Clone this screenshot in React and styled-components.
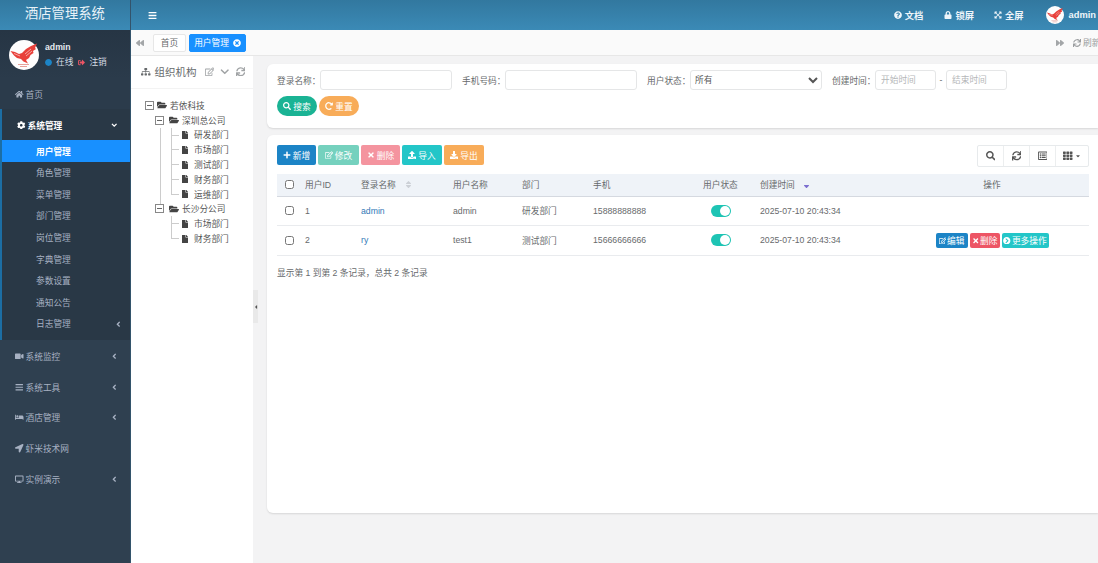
import React from 'react';
import styled, { createGlobalStyle } from 'styled-components';
import {
  FaBackward, FaBars, FaBed, FaChevronDown, FaCircle, FaCog, FaDesktop, FaDownload, FaExpandArrowsAlt,
  FaFile, FaFolderOpen, FaForward, FaHome, FaLocationArrow, FaLock, FaPlus, FaQuestionCircle, FaRedoAlt,
  FaRegEdit, FaRegListAlt, FaSearch, FaSignOutAlt, FaSitemap, FaSort, FaSortDown, FaSync, FaTh, FaTimes,
  FaTimesCircle, FaUpload, FaVideo, FaChevronCircleRight, FaAngleLeft, FaAngleDown, FaCaretDown, FaCaretLeft,
} from 'react-icons/fa';

const GlobalStyle = createGlobalStyle`
  html, body { margin: 0; padding: 0; height: 100%; overflow: hidden; }
  body {
    font-family: "Liberation Sans", "Noto Sans CJK SC", sans-serif;
    font-size: 8.7px;
    color: #676a6c;
    background: #f3f3f4;
  }
  * { box-sizing: border-box; }
`;

const Logo = ({ size }) => (
  <svg width={size} height={size} viewBox="0 0 30 30">
    <circle cx="15" cy="15" r="15" fill="#fdfdfd" />
    <path d="M1.5 11 L6 12 L10 14 L13 13 L17 9 L22 6 L28 3.5 L26 8 L27 9 L24 11 L24.5 13 L21.5 15 L20 18 L17 20 L19 23.5 L14.5 21.5 L12 19 L8 18 L5 15.5 Z" fill="#e8403a" />
    <path d="M16 14 L22 9 M17 16 L23 11 M5 13.5 L11 16" stroke="#fbd0cc" strokeWidth="0.7" />
    <path d="M9 24.5 L20 24.5 M11 26.5 L18 26.5" stroke="#e8a09a" strokeWidth="1" />
  </svg>
);

const Page = styled.div`
  display: flex;
  width: 1098px;
  height: 563px;
  overflow: hidden;
`;

const Sidebar = styled.aside`
  flex: 0 0 131px;
  display: flex;
  flex-direction: column;
  background: #2f4050;
  border-right: 1px solid #33536b;
`;
const Brand = styled.div`
  height: 30px;
  flex: none;
  padding-left: 25px;
  font-size: 13.3px;
  line-height: 28px;
  color: #e8f2f8;
  background: linear-gradient(#32789f, #3b8ab6);
`;
const UserPanel = styled.div`
  height: 49px;
  flex: none;
  display: flex;
  padding: 10px 0 0 9px;
  gap: 6px;
  background: linear-gradient(#263544, #2b3b4b);
`;
const UserInfo = styled.div`
  padding-top: 1px;
  color: #d5dde5;
  strong { display: block; line-height: 12px; font-size: 8.7px; color: #e4e9ee; }
`;
const Status = styled.div`
  display: flex;
  align-items: center;
  gap: 4px;
  margin-top: 3px;
  line-height: 12px;
  svg { font-size: 7px; }
  svg + span { margin-right: 1px; }
`;
const SideItem = styled.div`
  height: ${p => p.$h || 30.7}px;
  flex: none;
  display: flex;
  align-items: center;
  padding: 0 ${p => (p.$sub ? 8 : 12)}px 0 ${p => (p.$sub ? 34 : p.$strong ? 17 : 15)}px;
  gap: 2px;
  color: ${p => (p.$active ? '#fff' : '#a7b1c2')};
  font-weight: ${p => (p.$strong ? 700 : 400)};
  background: ${p => (p.$active ? '#1890ff' : 'transparent')};
  font-size: 8.7px;
  svg { font-size: 8.5px; flex: none; }
  span { flex: 1; }
`;
const HomeRow = styled(SideItem)`
  background: #2b3b4b;
  height: 30px;
`;
const OpenGroup = styled.div`
  flex: none;
  height: 231px;
  padding-top: 1px;
  background: #293846;
  border-left: 2px solid #1c6ea4;
`;
const GroupHead = styled(SideItem)`
  height: 30px;
  color: #fff;
  padding-left: 15px;
`;
const SubList = styled.div`
  display: flex;
  flex-direction: column;
`;
const MenuRest = styled.div`
  padding-top: 1px;
`;

const Main = styled.main`
  flex: 1;
  min-width: 0;
  display: flex;
  flex-direction: column;
`;
const TopBar = styled.header`
  height: 30px;
  flex: none;
  display: flex;
  align-items: center;
  padding-left: 17px;
  color: #fff;
  background: linear-gradient(#32789f, #3b8ab6);
`;
const TopSpacer = styled.div`
  flex: 1;
`;
const TopLink = styled.div`
  display: flex;
  align-items: center;
  gap: ${p => p.$gap || 3}px;
  margin-right: ${p => p.$mr}px;
  font-weight: 700;
  font-size: 9.3px;
  color: #eef5fa;
  svg { font-size: 8px; }
`;
const TabBar = styled.div`
  height: 26px;
  flex: none;
  display: flex;
  align-items: center;
  padding-left: 5px;
  background: #fafafa;
  border-bottom: 1px solid #e7e7e7;
  white-space: nowrap;
`;
const NavIcon = styled.span`
  display: flex;
  color: #a3a6a8;
  font-size: 8px;
  width: 17px;
`;
const Tab = styled.div`
  height: 18px;
  display: flex;
  align-items: center;
  justify-content: center;
  gap: 4px;
  width: ${p => p.$w}px;
  margin-right: 3px;
  border-radius: 2px;
  background: ${p => (p.$active ? '#1890ff' : '#fff')};
  color: ${p => (p.$active ? '#fff' : '#676a6c')};
  border: 1px solid ${p => (p.$active ? '#1890ff' : '#e7e7e7')};
  svg { font-size: 8px; }
`;
const RefreshTab = styled.div`
  display: flex;
  align-items: center;
  gap: 2px;
  width: 25px;
  flex: none;
  overflow: hidden;
  color: #9a9d9f;
  svg { font-size: 8px; flex: none; }
`;

const Workspace = styled.div`
  flex: 1;
  min-height: 0;
  display: flex;
`;
const TreePanel = styled.section`
  flex: 0 0 122px;
  background: #fff;
`;
const TreeHead = styled.div`
  height: 33px;
  display: flex;
  align-items: center;
  padding: 0 0 1px 10px;
  font-size: 10.5px;
  color: #676a6c;
  border-bottom: 1px solid #f3f3f3;
  svg { font-size: 9.5px; flex: none; }
`;
const TreeTitle = styled.span`
  margin: 0 8px 0 4px;
  white-space: nowrap;
`;
const TreeTool = styled.span`
  display: flex;
  margin-right: 6px;
  color: #a0a3a5;
  svg { font-size: 9.5px; }
`;
const Tree = styled.div`
  padding-top: 9px;
`;
const TreeRow = styled.div`
  position: relative;
  height: 14.8px;
  display: flex;
  align-items: center;
  padding-left: ${p => 14 + p.$level * 10}px;
  color: #555;
  white-space: nowrap;
`;
const Toggle = styled.span`
  position: relative;
  flex: none;
  width: 9px;
  height: 9px;
  margin-right: ${p => p.$gap}px;
  border: 1px solid #888;
  background: #fff;
  display: flex;
  align-items: center;
  justify-content: center;
  &::after { content: ''; width: 5px; height: 1px; background: #666; }
`;
const FolderIcon = styled(FaFolderOpen)`
  flex: none;
  font-size: 10px;
  margin-right: 3px;
  color: #444;
`;
const LeafIcon = styled(FaFile)`
  flex: none;
  font-size: 8px;
  margin: 0 5px 0 26px;
  color: #444;
`;
const Connector = styled.i`
  position: absolute;
  left: ${p => p.$x}px;
  top: ${p => p.$top}px;
  height: ${p => p.$h}px;
  width: ${p => p.$w || 0}px;
  border-left: 1px solid #ccc;
  border-bottom: ${p => (p.$w ? '1px solid #ccc' : 'none')};
`;
const Splitter = styled.div`
  flex: 0 0 5px;
  background: #f3f3f4;
  display: flex;
  align-items: center;
`;
const Handle = styled.div`
  width: 5px;
  height: 33px;
  margin-top: -6px;
  background: #e9e9e9;
  display: flex;
  align-items: center;
  justify-content: center;
  color: #555;
  svg { font-size: 6px; flex: none; }
`;
const Content = styled.div`
  flex: 1;
  min-width: 0;
  padding: 8px 0 0 9px;
  background: #f3f3f4;
`;
const SearchCard = styled.section`
  height: 64px;
  padding: 6px 10px;
  margin-bottom: 7px;
  background: #fff;
  border-radius: 6px 0 0 6px;
  box-shadow: 0 1px 2px rgba(0, 0, 0, 0.12);
`;
const FormRow = styled.div`
  display: flex;
  align-items: center;
  height: 20px;
  white-space: nowrap;
`;
const FormLabel = styled.label`
  width: 43px;
  flex: none;
  margin-left: ${p => p.$ml || 0}px;
`;
const Field = styled.input`
  width: ${p => p.$w}px;
  height: 20px;
  flex: none;
  padding: 0 5px;
  border: 1px solid #e5e6e7;
  border-radius: 3px;
  font: inherit;
  outline: none;
  &::placeholder { color: #b5b7b9; }
`;
const Select = styled.select`
  width: 132px;
  height: 20px;
  flex: none;
  border: 1px solid #e5e6e7;
  border-radius: 3px;
  background: #fff;
  color: #555;
  font: inherit;
  outline: none;
`;
const Dash = styled.span`
  width: 10px;
  text-align: center;
`;
const FormButtons = styled.div`
  display: flex;
  gap: 2px;
  margin-top: 6px;
`;
const Pill = styled.button`
  width: 40px;
  height: 20px;
  display: flex;
  align-items: center;
  justify-content: center;
  gap: 2px;
  padding: 0;
  border: none;
  border-radius: 10px;
  color: #fff;
  background: ${p => p.$bg};
  font: inherit;
  svg { font-size: 8px; }
`;
const TableCard = styled.section`
  height: 378px;
  padding: 10px 9px 0 10px;
  background: #fff;
  border-radius: 6px 0 0 6px;
  box-shadow: 0 1px 2px rgba(0, 0, 0, 0.12);
`;
const Toolbar = styled.div`
  display: flex;
  align-items: flex-start;
  height: 29px;
  gap: 2px;
`;
const ActionButton = styled.button`
  width: ${p => p.$w}px;
  height: 20px;
  display: flex;
  align-items: center;
  justify-content: center;
  gap: 2px;
  padding: 0;
  border: none;
  border-radius: 2px;
  color: #fff;
  background: ${p => p.$bg};
  font: inherit;
  svg { font-size: 8px; }
`;
const ToolGroup = styled.div`
  margin-left: auto;
  display: flex;
  height: 22px;
  border: 1px solid #e7eaec;
  border-radius: 2px;
`;
const ToolButton = styled.span`
  width: ${p => p.$w || 26}px;
  display: flex;
  align-items: center;
  justify-content: center;
  color: #555;
  border-left: ${p => (p.$first ? 'none' : '1px solid #eceeef')};
  svg { font-size: 9.5px; }
  svg + svg { font-size: 6px; margin-left: 2px; }
`;
const Table = styled.table`
  width: 812px;
  border-collapse: collapse;
  table-layout: fixed;
  th {
    height: 22px;
    padding: 0 0 0 8px;
    text-align: left;
    font-weight: 400;
    background: #eff3f8;
    border-bottom: 1px solid #d5d9e0;
  }
  td {
    height: 29.5px;
    padding: 0 0 0 8px;
    border-bottom: 1px solid #e9ebee;
  }
  th:last-child, td:last-child { text-align: center; padding: 0; }
`;
const Check = styled.input.attrs({ type: 'checkbox' })`
  display: block;
  width: 9px;
  height: 9px;
  margin: 0;
  accent-color: #1890ff;
`;
const SortMark = styled.span`
  margin-left: ${p => p.$ml}px;
  color: ${p => p.$color};
  font-size: 9px;
  svg { vertical-align: -1px; }
`;
const NameLink = styled.a`
  color: #337ab7;
`;
const Switch = styled.span`
  display: flex;
  justify-content: flex-end;
  align-items: center;
  width: 20px;
  height: 12px;
  margin-left: 8px;
  padding-right: 1px;
  border-radius: 6px;
  background: #1ec4b4;
  &::after { content: ''; width: 10px; height: 10px; border-radius: 50%; background: #fff; }
`;
const RowActions = styled.div`
  display: flex;
  justify-content: center;
  gap: 2px;
`;
const MiniButton = styled.span`
  height: 15px;
  width: ${p => p.$w}px;
  display: flex;
  align-items: center;
  justify-content: center;
  gap: 1px;
  color: #fff;
  border-radius: 2px;
  background: ${p => p.$bg};
  svg { font-size: 7.5px; }
`;
const Summary = styled.div`
  margin-top: 11px;
  line-height: 12px;
`;

const subMenus = ['用户管理', '角色管理', '菜单管理', '部门管理', '岗位管理', '字典管理', '参数设置', '通知公告'];
const menus = [
  { icon: <FaVideo />, name: '系统监控', more: true },
  { icon: <FaBars />, name: '系统工具', more: true },
  { icon: <FaBed />, name: '酒店管理', more: true },
  { icon: <FaLocationArrow />, name: '虾米技术网' },
  { icon: <FaDesktop />, name: '实例演示', more: true },
];
const users = [
  { id: 1, login: 'admin', name: 'admin', dept: '研发部门', phone: '15888888888' },
  { id: 2, login: 'ry', name: 'test1', dept: '测试部门', phone: '15666666666', actions: true },
];

const Branch = ({ level, name, trunk }) => (
  <TreeRow $level={level}>
    {trunk && <Connector $x={29} $top={0} $h={4} />}
    <Toggle $gap={level ? 5 : 3} />
    <FolderIcon />
    {name}
  </TreeRow>
);

const Leaf = ({ name, last, trunk }) => (
  <TreeRow $level={1}>
    {trunk && <Connector $x={29} $top={0} $h={15} />}
    <Connector $x={40} $top={0} $h={8} $w={8} />
    {!last && <Connector $x={40} $top={8} $h={7} />}
    <LeafIcon />
    {name}
  </TreeRow>
);

export default function App() {
  return (
    <Page>
      <GlobalStyle />
      <Sidebar>
        <Brand>酒店管理系统</Brand>
        <UserPanel>
          <Logo size={30} />
          <UserInfo>
            <strong>admin</strong>
            <Status>
              <FaCircle color="#1c84c6" /><span>在线</span>
              <FaSignOutAlt color="#ed5565" /><span>注销</span>
            </Status>
          </UserInfo>
        </UserPanel>
        <HomeRow><FaHome /><span>首页</span></HomeRow>
        <OpenGroup>
          <GroupHead $strong><FaCog /><span>系统管理</span><FaAngleDown /></GroupHead>
          <SubList>
            {subMenus.map((m, i) => (
              <SideItem key={m} $sub $h={i === 0 ? 22 : 21.6} $active={i === 0} $strong={i === 0}>
                <span>{m}</span>
              </SideItem>
            ))}
            <SideItem $sub $h={21.6}><span>日志管理</span><FaAngleLeft /></SideItem>
          </SubList>
        </OpenGroup>
        <MenuRest>
          {menus.map(m => (
            <SideItem key={m.name}>
              {m.icon}
              <span>{m.name}</span>
              {m.more && <FaAngleLeft />}
            </SideItem>
          ))}
        </MenuRest>
      </Sidebar>

      <Main>
        <TopBar>
          <FaBars size={9} />
          <TopSpacer />
          <TopLink $mr={21}><FaQuestionCircle />文档</TopLink>
          <TopLink $mr={20}><FaLock />锁屏</TopLink>
          <TopLink $mr={22}><FaExpandArrowsAlt />全屏</TopLink>
          <TopLink $mr={2} $gap={5}><Logo size={18} /><span>admin</span></TopLink>
        </TopBar>
        <TabBar>
          <NavIcon><FaBackward /></NavIcon>
          <Tab $w={33}>首页</Tab>
          <Tab $w={57} $active>用户管理<FaTimesCircle /></Tab>
          <TopSpacer />
          <NavIcon><FaForward /></NavIcon>
          <RefreshTab><FaSync />刷新</RefreshTab>
        </TabBar>
        <Workspace>
          <TreePanel>
            <TreeHead>
              <FaSitemap />
              <TreeTitle>组织机构</TreeTitle>
              <TreeTool><FaRegEdit /></TreeTool>
              <TreeTool><FaChevronDown /></TreeTool>
              <TreeTool><FaSync /></TreeTool>
            </TreeHead>
            <Tree>
              <Branch level={0} name="若依科技" />
              <Branch level={1} name="深圳总公司" />
              <Leaf name="研发部门" trunk />
              <Leaf name="市场部门" trunk />
              <Leaf name="测试部门" trunk />
              <Leaf name="财务部门" trunk />
              <Leaf name="运维部门" trunk last />
              <Branch level={1} name="长沙分公司" trunk />
              <Leaf name="市场部门" />
              <Leaf name="财务部门" last />
            </Tree>
          </TreePanel>
          <Splitter>
            <Handle><FaCaretLeft /></Handle>
          </Splitter>
          <Content>
            <SearchCard>
              <FormRow>
                <FormLabel>登录名称：</FormLabel>
                <Field $w={132} />
                <FormLabel $ml={10}>手机号码：</FormLabel>
                <Field $w={132} />
                <FormLabel $ml={10}>用户状态：</FormLabel>
                <Select defaultValue="所有"><option>所有</option></Select>
                <FormLabel $ml={10}>创建时间：</FormLabel>
                <Field $w={61} placeholder="开始时间" />
                <Dash>-</Dash>
                <Field $w={61} placeholder="结束时间" />
              </FormRow>
              <FormButtons>
                <Pill $bg="#1ab394"><FaSearch />搜索</Pill>
                <Pill $bg="#f8ac59"><FaRedoAlt />重置</Pill>
              </FormButtons>
            </SearchCard>
            <TableCard>
              <Toolbar>
                <ActionButton $w={39} $bg="#1c84c6"><FaPlus />新增</ActionButton>
                <ActionButton $w={41} $bg="#75d1be"><FaRegEdit />修改</ActionButton>
                <ActionButton $w={39} $bg="#f4949f"><FaTimes />删除</ActionButton>
                <ActionButton $w={40} $bg="#23c6c8"><FaUpload />导入</ActionButton>
                <ActionButton $w={40} $bg="#f8ac59"><FaDownload />导出</ActionButton>
                <ToolGroup>
                  <ToolButton $first $w={25}><FaSearch /></ToolButton>
                  <ToolButton><FaSync /></ToolButton>
                  <ToolButton><FaRegListAlt /></ToolButton>
                  <ToolButton $w={33}><FaTh /><FaCaretDown /></ToolButton>
                </ToolGroup>
              </Toolbar>
              <Table>
                <colgroup>
                  <col width="20" /><col width="56" /><col width="92" /><col width="69" />
                  <col width="71" /><col width="110" /><col width="57" /><col width="143" /><col width="194" />
                </colgroup>
                <thead>
                  <tr>
                    <th><Check /></th>
                    <th>用户ID</th>
                    <th>登录名称<SortMark $ml={8} $color="#ccd0d6"><FaSort /></SortMark></th>
                    <th>用户名称</th>
                    <th>部门</th>
                    <th>手机</th>
                    <th>用户状态</th>
                    <th>创建时间<SortMark $ml={7} $color="#7c6fd0"><FaSortDown /></SortMark></th>
                    <th>操作</th>
                  </tr>
                </thead>
                <tbody>
                  {users.map(u => (
                    <tr key={u.id}>
                      <td><Check /></td>
                      <td>{u.id}</td>
                      <td><NameLink>{u.login}</NameLink></td>
                      <td>{u.name}</td>
                      <td>{u.dept}</td>
                      <td>{u.phone}</td>
                      <td><Switch /></td>
                      <td>2025-07-10 20:43:34</td>
                      <td>
                        {u.actions && (
                          <RowActions>
                            <MiniButton $w={32} $bg="#1c84c6"><FaRegEdit />编辑</MiniButton>
                            <MiniButton $w={30} $bg="#ed5565"><FaTimes />删除</MiniButton>
                            <MiniButton $w={47} $bg="#23c6c8"><FaChevronCircleRight />更多操作</MiniButton>
                          </RowActions>
                        )}
                      </td>
                    </tr>
                  ))}
                </tbody>
              </Table>
              <Summary>显示第 1 到第 2 条记录，总共 2 条记录</Summary>
            </TableCard>
          </Content>
        </Workspace>
      </Main>
    </Page>
  );
}
